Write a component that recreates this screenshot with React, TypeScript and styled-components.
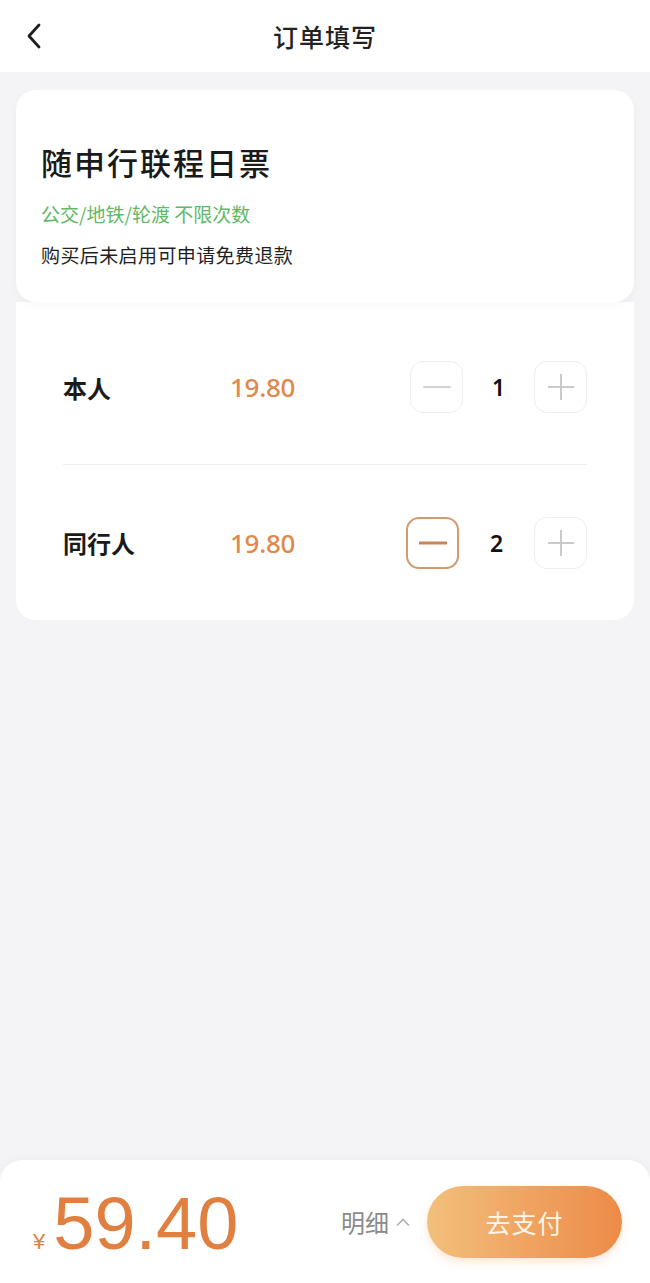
import styled, { createGlobalStyle } from "styled-components";

const GlobalStyle = createGlobalStyle`
  html, body {
    margin: 0;
    padding: 0;
    background: #f4f4f6;
  }
  body {
    font-family: "Noto Sans CJK SC", "Noto Sans", sans-serif;
    color: #1c1c1c;
  }
  * {
    box-sizing: border-box;
  }
`;

const Page = styled.div`
  height: 100vh;
  display: flex;
  flex-direction: column;
  background: #f4f4f6;
`;

const Header = styled.header`
  height: 72px;
  flex: 0 0 72px;
  background: #ffffff;
  display: grid;
  grid-template-columns: 72px 1fr 72px;
  align-items: center;
`;

const BackButton = styled.button`
  border: none;
  background: none;
  padding: 0 0 0 24px;
  height: 72px;
  display: flex;
  align-items: center;
  cursor: pointer;
`;

const HeaderTitle = styled.h1`
  margin: 0;
  text-align: center;
  font-size: 25px;
  font-weight: 500;
  color: #222;
  line-height: 72px;
  letter-spacing: 1px;
`;

const Content = styled.main`
  flex: 1;
  padding: 18px 16px 0 16px;
  display: flex;
  flex-direction: column;
`;

const TicketCard = styled.section`
  position: relative;
  z-index: 1;
  background: #ffffff;
  border-radius: 20px;
  padding: 52px 25px 33px;
  box-shadow: 0 3px 8px rgba(0, 0, 0, 0.035);
`;

const TicketTitle = styled.h2`
  margin: 0;
  font-size: 31px;
  line-height: 40px;
  font-weight: 500;
  letter-spacing: 2px;
  color: #1a1a1a;
`;

const Scope = styled.p`
  margin: 18px 0 0;
  font-size: 19px;
  line-height: 28px;
  color: #62b866;
`;

const Notice = styled.p`
  margin: 13px 0 0;
  font-size: 19px;
  line-height: 28px;
  color: #1f1f1f;
  letter-spacing: 0.4px;
`;

const PassengerCard = styled.section`
  background: #ffffff;
  border-radius: 0 0 20px 20px;
  padding: 8px 47px 0 47px;
`;

const Row = styled.div<{ $divider?: boolean }>`
  height: 155px;
  display: flex;
  align-items: center;
  border-bottom: ${(p) => (p.$divider ? "1.5px solid #efefef" : "none")};
`;

const Label = styled.span`
  width: 167px;
  font-size: 24px;
  font-weight: 600;
  color: #1a1a1a;
`;

const Price = styled.span`
  flex: 1;
  font-family: "Noto Sans", "Noto Sans CJK SC", sans-serif;
  font-size: 26px;
  font-weight: 500;
  letter-spacing: -0.3px;
  color: #e0894b;
`;

const Stepper = styled.div`
  display: flex;
  align-items: center;
`;

const StepButton = styled.button<{ $active?: boolean }>`
  width: 53px;
  height: 52px;
  border-radius: 13px;
  border: ${(p) => (p.$active ? "2px solid #d39a6e" : "1.5px solid #eeeeee")};
  background: #ffffff;
  display: flex;
  align-items: center;
  justify-content: center;
  padding: 0;
  cursor: pointer;
`;

const Qty = styled.span<{ $wide?: boolean }>`
  width: ${(p) => (p.$wide ? "75px" : "71px")};
  text-align: center;
  font-family: "Noto Sans", sans-serif;
  font-size: 23px;
  font-weight: 600;
  color: #111;
`;

const BottomBar = styled.footer`
  flex: 0 0 123px;
  background: #ffffff;
  border-radius: 22px 22px 0 0;
  display: flex;
  align-items: center;
  padding: 0 28px 0 33px;
  box-shadow: 0 -2px 10px rgba(0, 0, 0, 0.03);
`;

const Total = styled.div`
  flex: 1;
  display: flex;
  align-items: baseline;
  color: #e07f40;
  font-family: "Liberation Sans", Arial, sans-serif;
  padding-top: 4px;
`;

const Currency = styled.span`
  font-size: 22px;
  margin-right: 8px;
`;

const Amount = styled.span`
  font-size: 74px;
  line-height: 1;
`;

const Detail = styled.button`
  border: none;
  background: none;
  display: flex;
  align-items: center;
  gap: 6px;
  padding: 0;
  margin-right: 16px;
  font-family: "Noto Sans CJK SC", sans-serif;
  font-size: 24px;
  color: #8a8a8a;
  cursor: pointer;
`;

const PayButton = styled.button`
  width: 195px;
  height: 72px;
  border: none;
  border-radius: 36px;
  background: linear-gradient(90deg, #f2c07c 0%, #f0a462 50%, #ed8b48 100%);
  box-shadow: 0 4px 10px rgba(238, 140, 72, 0.22);
  color: #fff6e8;
  font-family: "Noto Sans CJK SC", sans-serif;
  font-size: 25px;
  letter-spacing: 1px;
  cursor: pointer;
`;

function MinusIcon({ active }: { active?: boolean }) {
  return (
    <svg width="28" height="28" viewBox="0 0 28 28">
      <line
        x1="1"
        y1="14"
        x2="27"
        y2="14"
        stroke={active ? "#c98356" : "#d2d2d2"}
        strokeWidth={active ? 3 : 2}
        strokeLinecap="round"
      />
    </svg>
  );
}

function PlusIcon() {
  return (
    <svg width="28" height="28" viewBox="0 0 28 28">
      <line x1="1" y1="14" x2="27" y2="14" stroke="#cacaca" strokeWidth="2" />
      <line x1="14" y1="1" x2="14" y2="27" stroke="#cacaca" strokeWidth="2" />
    </svg>
  );
}

const passengers = [
  { label: "本人", price: "19.80", qty: 1 },
  { label: "同行人", price: "19.80", qty: 2 },
];

export default function App() {
  return (
    <>
      <GlobalStyle />
      <Page>
        <Header>
          <BackButton aria-label="返回">
            <svg width="24" height="26" viewBox="0 0 24 26">
              <polyline
                points="15,2 5,13 15,24"
                fill="none"
                stroke="#1e1e1e"
                strokeWidth="2.8"
                strokeLinecap="round"
                strokeLinejoin="round"
              />
            </svg>
          </BackButton>
          <HeaderTitle>订单填写</HeaderTitle>
          <span />
        </Header>

        <Content>
          <TicketCard>
            <TicketTitle>随申行联程日票</TicketTitle>
            <Scope>公交/地铁/轮渡 不限次数</Scope>
            <Notice>购买后未启用可申请免费退款</Notice>
          </TicketCard>

          <PassengerCard>
            {passengers.map((p, i) => (
              <Row key={p.label} $divider={i < passengers.length - 1}>
                <Label>{p.label}</Label>
                <Price>{p.price}</Price>
                <Stepper>
                  <StepButton $active={p.qty > 1} aria-label="减少">
                    <MinusIcon active={p.qty > 1} />
                  </StepButton>
                  <Qty $wide={p.qty > 1}>{p.qty}</Qty>
                  <StepButton aria-label="增加">
                    <PlusIcon />
                  </StepButton>
                </Stepper>
              </Row>
            ))}
          </PassengerCard>
        </Content>

        <BottomBar>
          <Total>
            <Currency>¥</Currency>
            <Amount>59.40</Amount>
          </Total>
          <Detail>
            明细
            <svg width="16" height="10" viewBox="0 0 16 10">
              <polyline
                points="2,8.5 8,2.5 14,8.5"
                fill="none"
                stroke="#b0b0b0"
                strokeWidth="1.6"
              />
            </svg>
          </Detail>
          <PayButton>去支付</PayButton>
        </BottomBar>
      </Page>
    </>
  );
}
